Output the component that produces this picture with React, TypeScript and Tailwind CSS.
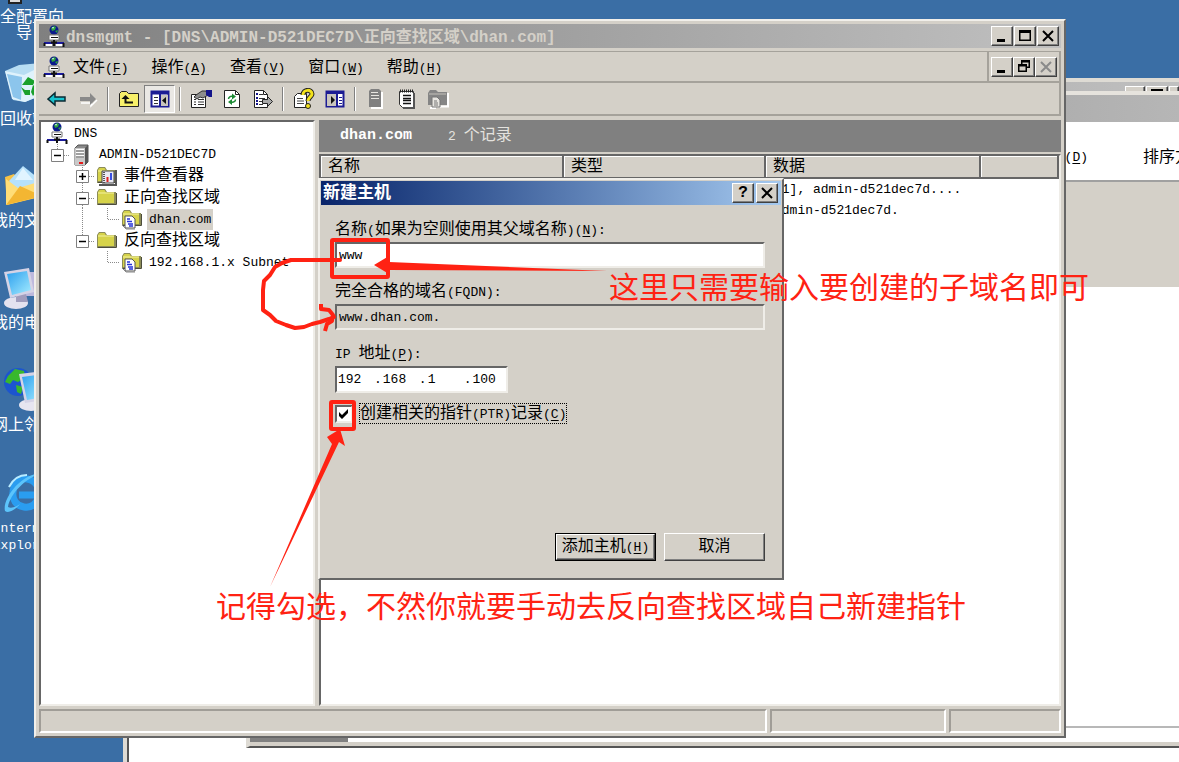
import React, { useState } from 'react';
import clsx from 'clsx';

const raised =
  'border border-t-white border-l-white border-r-[#404040] border-b-[#404040] shadow-[inset_-1px_-1px_0_#808080] bg-[#d4d0c8]';
const sunken =
  'border-2 border-t-[#666666] border-l-[#666666] border-r-[#efede8] border-b-[#efede8]';
const frame =
  'border-2 border-t-[#f1efea] border-l-[#f1efea] border-r-[#666666] border-b-[#666666] bg-[#d4d0c8]';

// Han characters take a full 16px cell, latin ones half of it
const Mix = ({ text }: { text: string }) => (
  <>
    {text.split(/([\u0000-\u00ff]+)/).filter(Boolean).map((part, i) => (
      <span key={i} className={part.charCodeAt(0) < 256 ? 'text-[13px]' : 'text-base leading-none'}>
        {part}
      </span>
    ))}
  </>
);

const Hotkey = ({ letter }: { letter: string }) => (
  <span className="text-[13px]">
    (<u className="underline-offset-2">{letter}</u>)
  </span>
);

/* ---------- Icons ---------- */

const DnsIcon = () => (
  <svg width="22" height="22" viewBox="0 0 22 22" className="shrink-0">
    <circle cx="11" cy="5" r="4.5" fill="#0a1a8c" />
    <path d="M8 3l3-2 2 1-1 3-3 1zM12 6l3-1-1 3z" fill="#2fa33b" />
    <path d="M9 2l2 0-1 2z" fill="#d8f0ff" />
    <path d="M6 10h10v5H6z" fill="#fff" stroke="#777" />
    <path d="M8 12.500h7" stroke="#111" />
    <path d="M1 17h20v2H1z" fill="#1a1a9c" />
    <path d="M1 20h8M13 20h7" stroke="#fff" strokeWidth="2" />
    <path d="M8 17.500h6M11 15v6M20.500 18v4M1.500 18v3" stroke="#111" strokeWidth="2" />
  </svg>
);

const ServerIcon = () => (
  <svg width="22" height="22" viewBox="0 0 22 22">
    <path d="M4 4l3-3h10v17l-3 3H4z" fill="#8a8a8a" stroke="#555" />
    <path d="M4 4h10v17H4z" fill="#c9c9c9" />
    <path d="M14 4l3-3v17l-3 3z" fill="#555" />
    <path d="M5 7h8M5 10h8M5 13h8" stroke="#777" />
    <path d="M5 5.500h8M5 8.500h8M5 11.500h8" stroke="#fff" />
    <path d="M8 18h4v2H8z" fill="#e31b1b" />
  </svg>
);

const FolderShape = () => (
  <>
    <path d="M1 5l2-3h6l2 3h9v13H1z" fill="#8c8c58" />
    <path d="M2 5l1.500-2h5L10 5.500h8V16H2z" fill="#d6d34a" />
    <path d="M2 6h16" stroke="#f4f2a0" />
    <path d="M2 17.500h18.500V6" fill="none" stroke="#4c4c3c" />
  </>
);

const FolderIcon = () => (
  <svg width="22" height="22" viewBox="0 0 22 22">
    <FolderShape />
  </svg>
);

const EventIcon = () => (
  <svg width="22" height="22" viewBox="0 0 22 22">
    <FolderShape />
    <path d="M6 6h12v12H6z" fill="#e9e9f2" stroke="#444" />
    <path d="M8 7v11" stroke="#555" strokeDasharray="1 1" strokeWidth="2" />
    <path d="M11.500 12v5" stroke="#e02020" strokeWidth="2" />
    <path d="M15 8v7" stroke="#3a50e0" strokeWidth="2" />
    <path d="M3 20h17V5" fill="none" stroke="#555" strokeWidth="2" />
  </svg>
);

const ZoneIcon = () => (
  <svg width="22" height="22" viewBox="0 0 22 22">
    <FolderShape />
    <path d="M4 8h7l3 3v9H4z" fill="#fff" stroke="#555" />
    <path d="M6 11h3M6 13.500h5M7 16h5M8 18h4" stroke="#2433d8" strokeWidth="1.500" />
    <path d="M1 17l4 4h9" fill="none" stroke="#888" />
  </svg>
);

const BackIcon = () => (
  <svg width="20" height="20" viewBox="0 0 20 20">
    <path d="M1 10l7-6v4h10v4H8v4z" fill="#18c3cf" stroke="#0b2a33" strokeWidth="1.500" />
  </svg>
);

const ForwardIcon = () => (
  <svg width="20" height="20" viewBox="0 0 20 20">
    <path d="M19 11l-6 6v-3H3" fill="none" stroke="#fff" strokeWidth="1.500" />
    <path d="M18 10l-6-6v4H2v4h10v4z" fill="#8a8a8a" />
  </svg>
);

const UpIcon = () => (
  <svg width="22" height="20" viewBox="0 0 22 20">
    <path d="M1.500 17.500V4.500l2-2h5l2 2h10v13z" fill="#f7f06a" stroke="#222" />
    <path d="M7.500 8v5.500H15" fill="none" stroke="#111" strokeWidth="2" />
    <path d="M3.500 10l4-4 4 4z" fill="#111" />
  </svg>
);

const TreePanelIcon = () => (
  <svg width="20" height="18" viewBox="0 0 20 18">
    <path d="M1.500 1.500h17v15h-17z" fill="#fff" stroke="#1c1c94" strokeWidth="2" />
    <path d="M1 3h18" stroke="#1c1c94" strokeWidth="3" />
    <path d="M10 2v14" stroke="#1c1c94" strokeWidth="2" />
    <path d="M11 5h7v11h-7z" fill="#c9c5bd" />
    <path d="M4 7.500h4M4 10.500h4M4 13.500h4" stroke="#333" />
    <path d="M16 7v7l-4-3.500z" fill="#111" />
  </svg>
);

const ActionPanelIcon = () => (
  <svg width="20" height="18" viewBox="0 0 20 18">
    <path d="M1.500 1.500h17v15h-17z" fill="#fff" stroke="#1c1c94" strokeWidth="2" />
    <path d="M1 3h18" stroke="#1c1c94" strokeWidth="2" />
    <path d="M2 4h9v12H2z" fill="#c9c5bd" />
    <path d="M12 2v14" stroke="#1c1c94" strokeWidth="2" />
    <path d="M14 7.500h3M14 10.500h3M14 13.500h3" stroke="#1c1c94" />
    <path d="M6 6v8l4-4z" fill="#111" />
  </svg>
);

const PropertiesIcon = () => (
  <svg width="22" height="20" viewBox="0 0 22 20">
    <path d="M1.500 5.500h14v13h-14z" fill="#fff" stroke="#222" />
    <path d="M4 10.500h2M8 10.500h6M4 13h2M8 13h6M4 15.500h2M8 15.500h6" stroke="#333" />
    <path d="M6 6l6-4h4l2 4-5 3-3-1-3 2-3-2z" fill="#8d8d8d" stroke="#333" />
    <path d="M16 1h6v7h-3l-3-2z" fill="#14148a" />
  </svg>
);

const RefreshIcon = () => (
  <svg width="20" height="20" viewBox="0 0 20 20">
    <path d="M2.500 1.500h11l4 4v13h-15z" fill="#fff" stroke="#222" />
    <path d="M13.500 1.500v4h4" fill="none" stroke="#222" />
    <path d="M6.500 10c0-2 2-3 4-2.500M13.500 10.500c0 2-2 3-4 2.500" fill="none" stroke="#1c8a34" strokeWidth="1.500" />
    <path d="M10 4.500l4 3-4 3zM10 10l-4 3 4 3z" fill="#1c8a34" />
  </svg>
);

const ExportIcon = () => (
  <svg width="20" height="20" viewBox="0 0 20 20">
    <path d="M1.500 1.500h9l4 4v13h-13z" fill="#fff" stroke="#222" />
    <path d="M10.500 1.500v4h4" fill="none" stroke="#222" />
    <path d="M3 5h2M3 9h2M3 12h2M3 15h2" stroke="#14148a" strokeWidth="2" />
    <path d="M6 5.500h4M6 9.500h6M6 12.500h3M6 15.500h4" stroke="#333" />
    <path d="M9.500 10.500h5v-3l5 5-5 5v-3h-5z" fill="#a9a9a9" stroke="#222" />
  </svg>
);

const HelpIcon = () => (
  <svg width="22" height="22" viewBox="0 0 22 22">
    <path d="M1.500 8.500l3-3h9v14h-12z" fill="#fff" stroke="#222" />
    <path d="M4 10.500h6M4 13h7M4 15.500h7" stroke="#444" />
    <path d="M10 7c0-6 9-6 9-1 0 3-4 3-4 7" fill="none" stroke="#222" strokeWidth="5" />
    <path d="M10 7c0-6 9-6 9-1 0 3-4 3-4 7" fill="none" stroke="#f3e21c" strokeWidth="3" />
    <circle cx="15" cy="18" r="2.500" fill="#f3e21c" stroke="#222" />
  </svg>
);

const GrayServerIcon = () => (
  <svg width="20" height="22" viewBox="0 0 20 22">
    <path d="M5 20h11V4" fill="none" stroke="#fff" strokeWidth="2" />
    <path d="M3 3l2-2h8l2 2v16H3z" fill="#808080" />
    <path d="M5 4.500h7M5 7.500h8M5 10.500h8" stroke="#e8e6e1" />
  </svg>
);

const NotepadIcon = () => (
  <svg width="20" height="22" viewBox="0 0 20 22">
    <path d="M2.500 3.500h14v16h-11l-3-3z" fill="#fff" stroke="#333" />
    <path d="M3 3h13" stroke="#222" strokeWidth="3" strokeDasharray="1 1" />
    <path d="M6 7.500h8M6 10.500h8M6 12.500h8M6 15.500h8" stroke="#111" strokeWidth="1.500" />
    <path d="M17 5v15H6" fill="none" stroke="#555" strokeWidth="2" />
  </svg>
);

const GrayFolderIcon = () => (
  <svg width="22" height="22" viewBox="0 0 22 22">
    <path d="M3 20h6M10 18.500h11V5" fill="none" stroke="#fff" strokeWidth="2" />
    <path d="M1 5l2-3h6l2 2h9v13H1z" fill="#858585" />
    <path d="M2 6h17" stroke="#c4c1ba" />
    <path d="M5 9h5l3 3v7H5z" fill="#e8e6e1" stroke="#777" />
    <path d="M7 13h3M7 15h4M7 17h4" stroke="#777" />
  </svg>
);

const DesktopArt = ({ kind }: { kind: string }) => (
  <svg width="40" height="44" viewBox="0 0 40 44" className="h-11 w-10 shrink-0">
    <defs>
      <linearGradient id={`screen-${kind}`} x1="0" y1="0" x2="1" y2="1">
        <stop offset="0" stopColor="#2c9fee" />
        <stop offset="1" stopColor="#a5ecff" />
      </linearGradient>
    </defs>
    {kind === 'wizard' && <path d="M5 20h12v23H5z" fill="#ddd" stroke="#222" strokeWidth="2" />}
    {kind === 'bin' && (
      <>
        <path d="M1 9l14-6 22-2 2 6-6 28-12 5-12-2z" fill="#b7ddf3" />
        <path d="M1 9l19 4 18-9-5 31-12 5-13-3z" fill="#dff2fc" />
        <path d="M3 12l15 3-1 23-8-3z" fill="#8cc5ec" />
        <path d="M18 23l6-8 7 4-2 4h-5zM17 25l4 8h5v-5h-5zM29 23l5 4-5 7-2-4z" fill="#1aa02c" />
      </>
    )}
    {kind === 'docs' && (
      <>
        <path d="M1 13l9-3 4 5 18-3v22L3 41z" fill="#f5c146" />
        <path d="M5 17L19 2l15 12-4 14H11z" fill="#b6e1fb" />
        <path d="M11 16l8-12 10 12z" fill="#e1f4ff" />
        <path d="M2 15l12 9L38 17v15L2 41z" fill="#ffdd77" />
        <path d="M2 41l14-19 22 10z" fill="#f3b632" />
      </>
    )}
    {kind === 'computer' && (
      <>
        <path d="M22 6h18v24H22z" fill="#bdb9dd" />
        <ellipse cx="12" cy="37" rx="12" ry="6" fill="#e4e2ef" />
        <path d="M12 28h10l2 8H12z" fill="#a19dbd" />
        <path d="M0 6l25-4 5 24-24 6z" fill="#d5d3e6" />
        <path d="M3 8l20-3 4 19-19 5z" fill="url(#screen-computer)" />
      </>
    )}
    {kind === 'network' && (
      <>
        <circle cx="14" cy="14" r="14" fill="#1c55cf" />
        <path d="M4 8l7-7 9 2 1 6-7 5-5-2-3 4-5-2zM12 17l7 2-2 7-4-2z" fill="#38b82d" />
        <ellipse cx="27" cy="37" rx="12" ry="6" fill="#e7e5f0" />
        <path d="M15 6l25-3v29l-19 3z" fill="#d5d3e6" />
        <path d="M18 9l22-3v23l-17 3z" fill="url(#screen-network)" />
      </>
    )}
    {kind === 'ie' && (
      <>
        <path
          d="M34 29c-3 6-8 9-14 8-8-1-12-8-11-15C10 13 16 8 23 9c8 1 13 8 12 16H15"
          fill="none"
          stroke="#2a9df0"
          strokeWidth="7"
        />
        <path d="M1 41C-2 30 16 3 39 3 22 7 6 24 4 37c4 2 9-1 12-3-4 5-11 10-15 7z" fill="#5cc4fb" />
        <path d="M5 17C9 9 16 5 23 5" fill="none" stroke="#b9ecff" strokeWidth="2" />
      </>
    )}
  </svg>
);

/* ---------- Desktop ---------- */

const shortcuts = [
  { kind: 'wizard', label: '安全配置向导' },
  { kind: 'bin', label: '回收站' },
  { kind: 'docs', label: '我的文档' },
  { kind: 'computer', label: '我的电脑' },
  { kind: 'network', label: '网上邻居' },
  { kind: 'ie', label: 'Internet Explorer' },
];

const DesktopIcons = () => (
  <div className="absolute -left-4 -top-10 flex w-20 flex-col">
    {shortcuts.map((s) => (
      <div key={s.kind} className="flex h-[102px] flex-col items-center gap-[6px] text-center leading-4 text-white">
        <DesktopArt kind={s.kind} />
        <span className="w-20">
          <Mix text={s.label} />
        </span>
      </div>
    ))}
  </div>
);

const BackgroundWindows = () => (
  <div className="absolute bottom-0 left-[123px] right-0 top-[78px] flex border-l-4 border-t-4 border-[#dedbd4] bg-white">
    <div className="flex grow flex-col border-l-2 border-[#555555]">
      <div className="flex h-6 justify-end gap-px bg-gradient-to-r from-[#808080] to-[#c0c0c0] pt-1">
        <span className={clsx('h-5 w-5', raised)} />
        <span className={clsx('h-5 w-[22px] px-1 pt-[2px]', raised)}>
          <i className="block h-[3px] bg-black" />
        </span>
        <span className={clsx('h-5 w-[10px]', raised)} />
      </div>
    </div>
    <div className="absolute bottom-[14px] left-[119px] right-0 top-[9px] flex flex-col border-b-2 border-l-4 border-t-4 border-b-[#555555] border-l-[#dedbd4] border-t-[#e6e3dd] bg-white">
      <div className="h-[27px] shrink-0 bg-gradient-to-r from-[#808080] to-[#b6b6b6]" />
      <div className="flex h-[60px] shrink-0 items-center justify-end gap-[55px] overflow-hidden border-b-2 border-[#a0a0a0] pt-[14px]">
        <Hotkey letter="D" />
        <span className="w-9 whitespace-nowrap">
          <Mix text="排序方式" />
        </span>
      </div>
      <div className="h-[105px] shrink-0 bg-[#d4d0c8]" />
      <div className="grow border-b-2 border-[#b8b8b8]" />
      <div className="h-[18px] shrink-0 border-b-4 border-[#d4d0c8]">
        <div className="h-[14px] w-[98px] bg-[#808080]" />
      </div>
    </div>
  </div>
);

/* ---------- Main window ---------- */

const glyphs: Record<string, React.ReactNode> = {
  min: <path d="M4 12h8v3H4z" fill="#000" />,
  max: <path d="M3 3h12v11H3zM4.500 6v6.500h9V6z" fill="#000" fillRule="evenodd" />,
  restore: (
    <path
      d="M6 2h9v8h-3v4H3V6h3zM7.500 4.500V6H12v2.500h1.500v-4zM4.500 8.500v4h6v-4z"
      fill="#000"
      fillRule="evenodd"
    />
  ),
  close: <path d="M4 4l10 10M14 4L4 14" stroke="currentColor" strokeWidth="2" />,
};

const CaptionButton = ({ glyph, label, disabled }: { glyph: string; label: string; disabled?: boolean }) => (
  <button
    type="button"
    aria-label={label}
    disabled={disabled}
    className={clsx('flex h-5 w-[22px] items-center justify-center text-black disabled:text-[#8a8a8a]', raised)}
  >
    <svg width="18" height="18" viewBox="0 0 18 18">
      {glyphs[glyph]}
    </svg>
  </button>
);

const menus = [
  ['文件', 'F'],
  ['操作', 'A'],
  ['查看', 'V'],
  ['窗口', 'W'],
  ['帮助', 'H'],
];

const tools: ([string, React.ReactNode] | null)[] = [
  ['后退', <BackIcon />],
  ['前进', <ForwardIcon />],
  null,
  ['向上', <UpIcon />],
  ['显示/隐藏控制台树', <TreePanelIcon />],
  null,
  ['属性', <PropertiesIcon />],
  ['刷新', <RefreshIcon />],
  ['导出列表', <ExportIcon />],
  null,
  ['帮助', <HelpIcon />],
  ['显示/隐藏操作窗格', <ActionPanelIcon />],
  null,
  ['新建服务器', <GrayServerIcon />],
  ['新建记录', <NotepadIcon />],
  ['新建区域', <GrayFolderIcon />],
];

const Toolbar = () => (
  <div className="flex h-[33px] shrink-0 items-center border-b-2 border-r-2 border-[#a5a29b] pl-[2px]">
    {tools.map((tool, i) =>
      tool ? (
        <button
          key={i}
          type="button"
          aria-label={tool[0]}
          className={clsx(
            'flex h-7 w-[31px] items-center justify-center',
            i === 4 && 'border border-b-white border-l-[#808080] border-r-white border-t-[#808080] bg-[#eae8e4]'
          )}
        >
          {tool[1]}
        </button>
      ) : (
        <div key={i} className="mx-1 h-6 w-[2px] border-l border-r border-l-[#808080] border-r-white" />
      )
    )}
  </div>
);

type Node = {
  text: string;
  icon: React.ReactNode;
  cells: string[];
  selected?: boolean;
};

const nodes: Node[] = [
  { text: 'DNS', icon: <DnsIcon />, cells: [] },
  { text: 'ADMIN-D521DEC7D', icon: <ServerIcon />, cells: ['root'] },
  { text: '事件查看器', icon: <EventIcon />, cells: ['blank', 'plus'] },
  { text: '正向查找区域', icon: <FolderIcon />, cells: ['blank', 'minus'] },
  { text: 'dhan.com', icon: <ZoneIcon />, cells: ['blank', 'line', 'elbow'], selected: true },
  { text: '反向查找区域', icon: <FolderIcon />, cells: ['blank', 'last'] },
  { text: '192.168.1.x Subnet', icon: <ZoneIcon />, cells: ['blank', 'blank', 'elbow'] },
];

const TreeCell = ({ kind }: { kind: string }) => {
  const toggle = ['root', 'plus', 'minus', 'last'].includes(kind);
  const through = kind === 'plus' || kind === 'minus' || kind === 'line';
  return (
    <svg width="25" height="22" viewBox="0 0 25 22" className="shrink-0">
      <g stroke="#8a8a8a" strokeDasharray="1 1">
        {kind !== 'blank' && <path d={through ? 'M12.500 0v22' : 'M12.500 0v11'} />}
        {kind !== 'blank' && kind !== 'line' && <path d="M13 11.500h12" />}
      </g>
      {toggle && (
        <>
          <path d="M6.500 5.500h12v12h-12z" fill="#fff" stroke="#808080" />
          <path d="M9 11.500h7" stroke="#000" strokeWidth="1.500" />
        </>
      )}
      {kind === 'plus' && <path d="M12.500 8v7" stroke="#000" strokeWidth="1.500" />}
    </svg>
  );
};

const Tree = () => (
  <ul className={clsx('w-[276px] shrink-0 overflow-hidden bg-white pl-1', sunken)}>
    {nodes.map((n) => (
      <li key={n.text} className="flex h-[22px] items-center whitespace-nowrap even:h-[21px]">
        {n.cells.map((c, i) => (
          <TreeCell key={i} kind={c} />
        ))}
        <span className="ml-px shrink-0">{n.icon}</span>
        <span className={clsx('ml-1 px-[2px] leading-5', n.selected && 'bg-[#d4d0c8]')}>
          <Mix text={n.text} />
        </span>
      </li>
    ))}
  </ul>
);

const RecordList = () => (
  <div className="flex min-w-0 grow flex-col">
    <div className="flex h-8 shrink-0 items-center gap-9 bg-[#808080] pl-[21px] text-white">
      <span className="text-[15px] font-bold">dhan.com</span>
      <span className="text-[#e4e2de]">
        <Mix text="2 个记录" />
      </span>
    </div>
    <div className={clsx('mt-[2px] grow overflow-hidden bg-white', sunken)}>
      <table className="w-full table-fixed border-collapse text-left">
        <thead>
          <tr className="h-[22px] bg-[#d4d0c8]">
            {[
              ['名称', 'w-[242px]'],
              ['类型', 'w-[202px]'],
              ['数据', 'w-[215px]'],
              ['', ''],
            ].map(([title, width]) => (
              <th
                key={title}
                className={clsx(
                  'border-b-2 border-r-2 border-[#666666] p-0 pl-[7px] font-normal leading-5 shadow-[inset_1px_1px_0_#ffffff]',
                  width
                )}
              >
                <Mix text={title} />
              </th>
            ))}
          </tr>
        </thead>
        <tbody>
          {['[1], admin-d521dec7d....', 'admin-d521dec7d.'].map((data) => (
            <tr key={data} className="h-[22px]">
              <td />
              <td />
              <td className="whitespace-nowrap p-0 pl-[9px] text-[13px]">{data}</td>
              <td />
            </tr>
          ))}
        </tbody>
      </table>
    </div>
  </div>
);

const MainWindow = () => (
  <div className={clsx('absolute bottom-6 left-[34px] right-[113px] top-[19px] flex flex-col p-[3px]', frame)}>
    <div className="flex h-6 shrink-0 items-center gap-px bg-gradient-to-r from-[#808080] to-[#c0c0c0] pl-1 pr-[2px]">
      <DnsIcon />
      <h1 className="grow whitespace-nowrap pt-[3px] text-base font-bold leading-6 text-[#d4d0c8]">
        dnsmgmt - [DNS\ADMIN-D521DEC7D\正向查找区域\dhan.com]
      </h1>
      <CaptionButton glyph="min" label="最小化" />
      <CaptionButton glyph="max" label="最大化" />
      <CaptionButton glyph="close" label="关闭" />
    </div>

    <div className="mt-[3px] flex h-8 shrink-0 items-center border-b-2 border-r-2 border-t border-[#a5a29b] pl-1">
      <DnsIcon />
      <nav className="ml-2 flex grow gap-[23px] pt-1">
        {menus.map(([name, key]) => (
          <button key={key} type="button" className="whitespace-nowrap leading-6">
            <Mix text={name} />
            <Hotkey letter={key} />
          </button>
        ))}
      </nav>
      <div className="flex h-full items-center border-l-2 border-[#a5a29b] px-[2px]">
        <CaptionButton glyph="min" label="最小化子窗口" />
        <CaptionButton glyph="restore" label="还原子窗口" />
        <CaptionButton glyph="close" label="关闭子窗口" disabled />
      </div>
    </div>
    <Toolbar />

    <div className="mt-1 flex min-h-0 grow gap-1">
      <Tree />
      <RecordList />
    </div>

    <div className="mt-[3px] flex h-6 shrink-0 gap-[3px]">
      {['grow', 'w-[176px]', 'w-[112px]'].map((w) => (
        <div
          key={w}
          className={clsx('border-2 border-b-white border-l-[#a09d97] border-r-white border-t-[#a09d97]', w)}
        />
      ))}
    </div>
  </div>
);

/* ---------- New host dialog ---------- */

const HostDialog = () => {
  const [name, setName] = useState('www');
  const [ip, setIp] = useState(['192', '168', '1', '100']);
  const [ptr, setPtr] = useState(true);

  return (
    <div
      role="dialog"
      aria-labelledby="dialog-title"
      className={clsx('absolute left-[318px] top-[178px] flex h-[402px] w-[466px] flex-col p-px', frame)}
    >
      <div className="flex h-6 shrink-0 items-center bg-gradient-to-r from-[#0a246a] to-[#a6caf0] pl-[2px] pr-[3px] text-white">
        <h2 id="dialog-title" className="grow pt-[2px] text-[17px] font-bold leading-6">
          新建主机
        </h2>
        <button
          type="button"
          aria-label="帮助"
          className={clsx('mr-[2px] h-5 w-[22px] text-base font-bold leading-4 text-black', raised)}
        >
          ?
        </button>
        <CaptionButton glyph="close" label="关闭" />
      </div>

      <form className="flex grow flex-col pb-4 pl-[14px] pr-4 pt-[14px]" onSubmit={(e) => e.preventDefault()}>
        <div className="flex flex-col gap-[13px]">
          <div className="flex flex-col gap-[3px]">
            <label htmlFor="host" className="h-5 leading-[22px]">
              <Mix text="名称(如果为空则使用其父域名称)" />
              <Hotkey letter="N" />
              <Mix text=":" />
            </label>
            <input
              id="host"
              value={name}
              onChange={(e) => setName(e.target.value)}
              className={clsx('h-[26px] bg-white pl-[2px] text-[13px] outline-none', sunken)}
            />
          </div>
          <div className="flex flex-col gap-[3px]">
            <label htmlFor="fqdn" className="h-5 leading-[22px]">
              <Mix text="完全合格的域名(FQDN):" />
            </label>
            <input
              id="fqdn"
              readOnly
              value={`${name}.dhan.com.`}
              className={clsx('h-[26px] bg-[#d4d0c8] pl-[2px] text-[13px] outline-none', sunken)}
            />
          </div>
          <div className="flex flex-col gap-[3px]">
            <label htmlFor="ip-0" className="h-5 leading-[22px]">
              <Mix text="IP 地址" />
              <Hotkey letter="P" />
              <Mix text=":" />
            </label>
            <div className={clsx('flex h-[27px] w-[173px] items-center bg-white text-[13px]', sunken)}>
              {ip.map((part, i) => (
                <React.Fragment key={i}>
                  {i > 0 && <span className="w-2">.</span>}
                  <input
                    id={`ip-${i}`}
                    aria-label={`IP ${i + 1}`}
                    value={part}
                    onChange={(e) => setIp(ip.map((p, j) => (j === i ? e.target.value : p)))}
                    className="w-[37px] bg-transparent pl-px outline-none"
                  />
                </React.Fragment>
              ))}
            </div>
          </div>
        </div>

        <div className="mt-[10px] flex items-center gap-[6px]">
          <span className="relative flex">
            <input
              id="ptr"
              type="checkbox"
              checked={ptr}
              onChange={(e) => setPtr(e.target.checked)}
              className={clsx('peer h-[18px] w-[18px] appearance-none bg-white', sunken)}
            />
            <svg
              width="18"
              height="18"
              viewBox="0 0 18 18"
              className="pointer-events-none absolute inset-0 hidden peer-checked:block"
            >
              <path d="M4 7l3 3 6-6v4l-6 6-3-3z" fill="#000" />
            </svg>
          </span>
          <label htmlFor="ptr" className="h-[21px] whitespace-nowrap border border-dotted border-black leading-5">
            <Mix text="创建相关的指针(PTR)记录" />
            <Hotkey letter="C" />
          </label>
        </div>

        <div className="mt-auto flex justify-end gap-2">
          <button type="submit" className="border border-black">
            <span className={clsx('flex h-[26px] w-[99px] items-center justify-center', raised)}>
              <span className="whitespace-nowrap leading-5">
                <Mix text="添加主机" />
                <Hotkey letter="H" />
              </span>
            </span>
          </button>
          <button type="button" className={clsx('h-7 w-[101px] leading-5', raised)}>
            <Mix text="取消" />
          </button>
        </div>
      </form>
    </div>
  );
};

/* ---------- Red notes on top ---------- */

const Notes = () => (
  <div className="pointer-events-none absolute inset-0 font-['Noto_Sans_CJK_SC',sans-serif] text-3xl leading-10 text-[#ff2213]">
    <svg width="1179" height="762" viewBox="0 0 1179 762" className="absolute left-0 top-0" fill="none" stroke="#ff2213">
      <rect x="332" y="240" width="56" height="37" rx="1" strokeWidth="4" />
      <rect x="331" y="402" width="23" height="27" rx="1" strokeWidth="4" />
      <path
        d="M340 260H291l-9 3-7 4-5 8-6 6-1 9v20l7 5 6 6 10 4 9 3 9-1 8-3 8-2 9-3 5-2"
        strokeWidth="4"
        strokeLinecap="round"
        strokeLinejoin="round"
      />
      <path d="M321 304v5l8 1 4 5-1 6-5 3-2 7" strokeWidth="4" strokeLinejoin="round" />
      <path d="M374 265l15-9v6l218 9-218-1v4z" fill="#ff2213" stroke="none" />
      <path d="M340 429l5 17-6-4-69 145 62-143-5-7z" fill="#ff2213" stroke="none" />
    </svg>
    <p className="absolute left-[609px] top-[265px] whitespace-nowrap">这里只需要输入要创建的子域名即可</p>
    <p className="absolute left-[216px] top-[584px] whitespace-nowrap">
      记得勾选，不然你就要手动去反向查找区域自己新建指针
    </p>
  </div>
);

const App = () => (
  <main className="relative h-screen min-h-[762px] overflow-hidden bg-[#3a6ea5] font-['Liberation_Mono','Noto_Sans_CJK_SC',monospace] text-black">
    <DesktopIcons />
    <BackgroundWindows />
    <MainWindow />
    <HostDialog />
    <Notes />
  </main>
);

export default App;
